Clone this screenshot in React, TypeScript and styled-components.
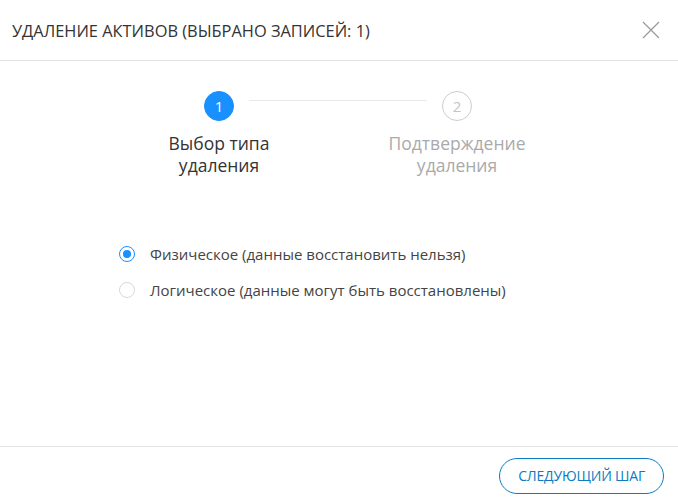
import { useState } from 'react';
import styled, { createGlobalStyle } from 'styled-components';

const GlobalStyle = createGlobalStyle`
  html, body {
    margin: 0;
    padding: 0;
    background: #fff;
  }
  body {
    font-family: "Open Sans", "Noto Sans", sans-serif;
    color: #333;
  }
`;

const Dialog = styled.div`
  width: 678px;
  height: 504px;
  display: flex;
  flex-direction: column;
  background: #fff;
`;

const Header = styled.div`
  height: 61px;
  box-sizing: border-box;
  display: flex;
  align-items: center;
  justify-content: space-between;
  padding: 0 18px 0 12px;
  border-bottom: 1px solid #e3e3e3;
`;

const Title = styled.h1`
  margin: 0;
  font-size: 16.4px;
  font-weight: 400;
  color: #333;
`;

const CloseButton = styled.button`
  width: 18px;
  height: 18px;
  padding: 0;
  border: none;
  background: none;
  cursor: pointer;
  display: flex;
`;

const Body = styled.div`
  flex: 1;
  display: flex;
  flex-direction: column;
  border-bottom: 1px solid #e3e3e3;
`;

const Steps = styled.div`
  display: flex;
  justify-content: center;
  padding-top: 30px;
  margin-left: -2px;
`;

const Step = styled.div`
  width: 120px;
  display: flex;
  flex-direction: column;
  align-items: center;
`;

const Connector = styled.div`
  width: 178px;
  height: 1px;
  background: #e8e8e8;
  margin: 9px -30px 0;
  align-self: flex-start;
`;

const StepIcon = styled.div<{ $active: boolean }>`
  width: 30px;
  height: 30px;
  box-sizing: border-box;
  border-radius: 50%;
  display: flex;
  align-items: center;
  justify-content: center;
  font-size: 15px;
  background: ${(p) => (p.$active ? '#1890ff' : '#fff')};
  color: ${(p) => (p.$active ? '#fff' : '#c4c4c4')};
  border: 1px solid ${(p) => (p.$active ? '#1890ff' : '#ccc')};
  position: relative;
  z-index: 1;
`;

const StepLabel = styled.div<{ $active: boolean }>`
  margin-top: 11px;
  text-align: center;
  font-size: 17.5px;
  line-height: 22px;
  white-space: nowrap;
  color: ${(p) => (p.$active ? '#333' : '#aaa')};
`;

const Options = styled.div`
  display: flex;
  flex-direction: column;
  gap: 16px;
  padding: 68px 0 0 119px;
`;

const Option = styled.label`
  display: flex;
  align-items: center;
  gap: 15px;
  font-size: 15px;
  line-height: 20px;
  color: #444;
  cursor: pointer;
  height: 20px;
`;

const RadioCircle = styled.span<{ $checked: boolean }>`
  width: 16px;
  height: 16px;
  box-sizing: border-box;
  border-radius: 50%;
  border: 1px solid ${(p) => (p.$checked ? '#1890ff' : '#d9d9d9')};
  display: flex;
  align-items: center;
  justify-content: center;
  &::after {
    content: '';
    width: 8px;
    height: 8px;
    border-radius: 50%;
    background: #1890ff;
    display: ${(p) => (p.$checked ? 'block' : 'none')};
  }
`;

const Footer = styled.div`
  height: 57px;
  display: flex;
  align-items: center;
  justify-content: flex-end;
  padding-right: 14px;
`;

const NextButton = styled.button`
  height: 36px;
  padding: 0 18px;
  border-radius: 18px;
  border: 1px solid #0a7cc1;
  background: #fff;
  color: #0a7cc1;
  font-family: "Open Sans", sans-serif;
  font-size: 14px;
  letter-spacing: -0.2px;
  cursor: pointer;
`;

const options = [
  'Физическое (данные восстановить нельзя)',
  'Логическое (данные могут быть восстановлены)',
];

export default function App() {
  const [selected, setSelected] = useState(0);

  return (
    <>
      <GlobalStyle />
      <Dialog>
        <Header>
          <Title>УДАЛЕНИЕ АКТИВОВ (ВЫБРАНО ЗАПИСЕЙ: 1)</Title>
          <CloseButton aria-label="Закрыть">
            <svg width="18" height="18" viewBox="0 0 18 18">
              <path d="M1 1L17 17M17 1L1 17" stroke="#999" strokeWidth="1.2" />
            </svg>
          </CloseButton>
        </Header>
        <Body>
          <Steps>
            <Step>
              <StepIcon $active>1</StepIcon>
              <StepLabel $active>
                Выбор типа
                <br />
                удаления
              </StepLabel>
            </Step>
            <Connector />
            <Step>
              <StepIcon $active={false}>2</StepIcon>
              <StepLabel $active={false}>
                Подтверждение
                <br />
                удаления
              </StepLabel>
            </Step>
          </Steps>
          <Options>
            {options.map((text, i) => (
              <Option key={text} onClick={() => setSelected(i)}>
                <RadioCircle $checked={selected === i} />
                {text}
              </Option>
            ))}
          </Options>
        </Body>
        <Footer>
          <NextButton>СЛЕДУЮЩИЙ ШАГ</NextButton>
        </Footer>
      </Dialog>
    </>
  );
}
